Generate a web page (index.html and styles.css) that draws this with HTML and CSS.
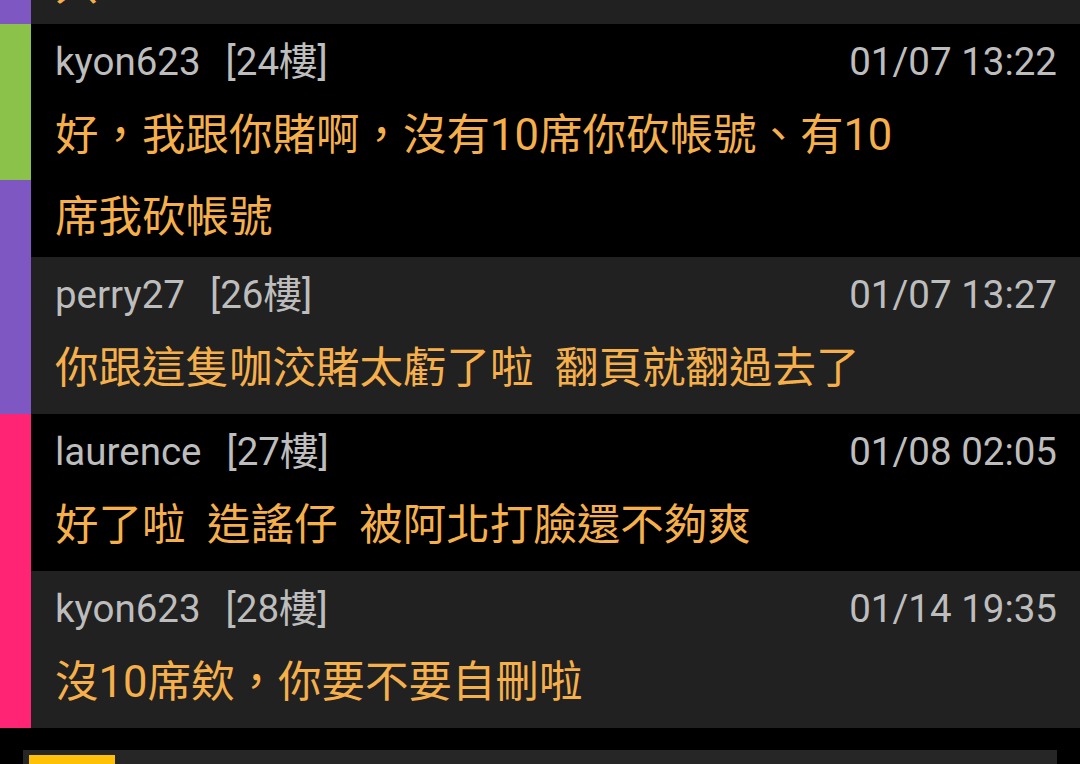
FILE: index.html
```
<!DOCTYPE html>
<html lang="zh-Hant">
<head>
<meta charset="utf-8">
<title>留言</title>
<link rel="stylesheet" href="styles.css">
</head>
<body>
<div class="list">
  <div class="strip">
    <div class="seg seg-purple seg-a"></div>
    <div class="seg seg-green seg-b"></div>
    <div class="seg seg-purple seg-c"></div>
    <div class="seg seg-pink seg-d"></div>
  </div>
  <div class="rows">
    <div class="row row-dark row-cut">
      <div class="content">只</div>
    </div>
    <div class="row row-black">
      <div class="meta"><span class="name">kyon623</span><span class="floor">[24樓]</span><span class="time">01/07 13:22</span></div>
      <div class="content content-wrap">好，我跟你賭啊，沒有10席你砍帳號、有10<br>席我砍帳號</div>
    </div>
    <div class="row row-dark">
      <div class="meta"><span class="name">perry27</span><span class="floor">[26樓]</span><span class="time">01/07 13:27</span></div>
      <div class="content">你跟這隻咖洨賭太虧了啦  翻頁就翻過去了</div>
    </div>
    <div class="row row-black">
      <div class="meta"><span class="name">laurence</span><span class="floor">[27樓]</span><span class="time">01/08 02:05</span></div>
      <div class="content">好了啦  造謠仔  被阿北打臉還不夠爽</div>
    </div>
    <div class="row row-dark">
      <div class="meta"><span class="name">kyon623</span><span class="floor">[28樓]</span><span class="time">01/14 19:35</span></div>
      <div class="content">沒10席欸，你要不要自刪啦</div>
    </div>
  </div>
</div>
<div class="footer">
  <div class="tabbar"><div class="tab-active"></div></div>
</div>
</body>
</html>
```

FILE: styles.css
```
html, body {
  margin: 0;
  padding: 0;
  background: #000;
  width: 1080px;
  height: 764px;
  overflow: hidden;
}
body {
  font-family: Roboto, "Noto Sans CJK TC", sans-serif;
}
.list {
  display: grid;
  grid-template-columns: 31px 1fr;
  height: 728px;
  overflow: hidden;
}
.strip {
  display: flex;
  flex-direction: column;
}
.seg-purple { background: #7e57c2; }
.seg-green { background: #8bc34a; }
.seg-pink { background: #ff2474; }
.seg-a { height: 24px; }
.seg-b { height: 156px; }
.seg-c { height: 234px; }
.seg-d { height: 314px; }

.rows {
  display: flex;
  flex-direction: column;
}
.row {
  padding: 13px 23px 7px 24px;
}
.row-dark { background: #212121; }
.row-black { background: #000; }
.row-cut {
  height: 24px;
  padding-top: 0;
  padding-bottom: 0;
  overflow: hidden;
  box-sizing: border-box;
}
.row-cut .content {
  margin-top: -52px;
}
.meta {
  display: flex;
  align-items: baseline;
  height: 50px;
  line-height: 50px;
  font-size: 38.5px;
  color: #bdbdbd;
  margin-bottom: 11px;
}
.floor {
  margin-left: 25px;
}
.time {
  margin-left: auto;
}
.content {
  font-size: 43.5px;
  line-height: 76px;
  color: #f6b04b;
  white-space: pre-wrap;
}
.content-wrap {
  line-height: 82px;
  margin-top: -3px;
  margin-bottom: -9px;
}
.footer {
  padding: 22px 23px 0 23px;
}
.tabbar {
  background: #262626;
  height: 20px;
  padding: 5px 0 0 6px;
  box-sizing: border-box;
}
.tab-active {
  background: #ffc107;
  width: 86px;
  height: 15px;
}
```
